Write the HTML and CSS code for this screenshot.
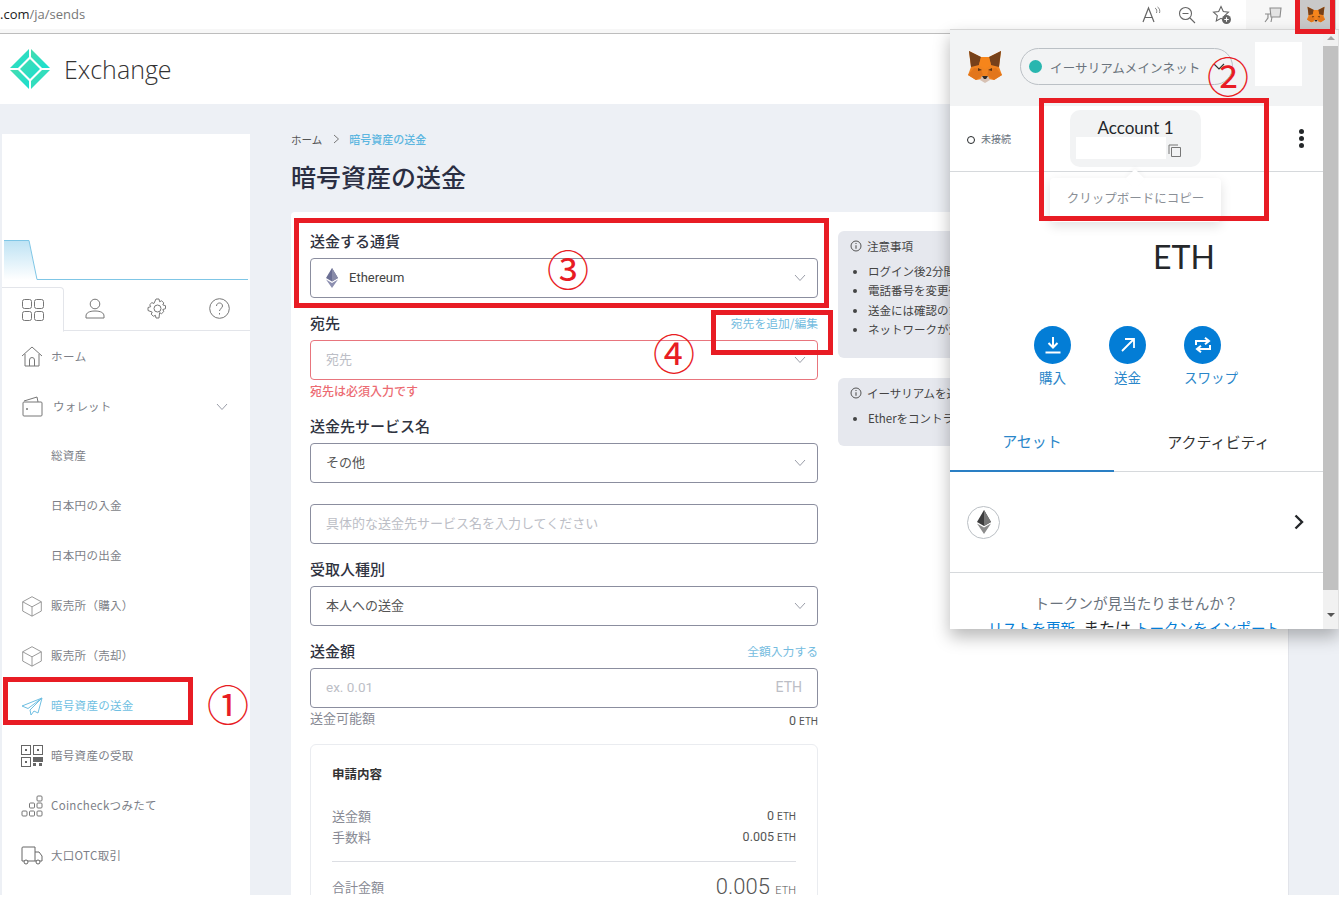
FILE: index.html
```html
<!DOCTYPE html>
<html lang="ja">
<head>
<meta charset="utf-8">
<title>暗号資産の送金</title>
<link rel="stylesheet" href="styles.css">
</head>
<body>
<svg class="defs" width="0" height="0">
  <symbol id="fox" viewBox="0 0 34 33">
    <polygon points="1,1 13,7 21,7 33,1 31,17 34,25 26,30 20,29 14,29 8,30 0,25 3,17" fill="#f0831f"/>
    <polygon points="1,1 13,7 11,15 3,17" fill="#76411a"/>
    <polygon points="33,1 21,7 23,15 31,17" fill="#76411a"/>
    <polygon points="13,7 21,7 23,15 17,19 11,15" fill="#f6851b"/>
    <polygon points="6,18 13,19 15,25 8,30 0,25" fill="#e2761b"/>
    <polygon points="28,18 21,19 19,25 26,30 34,25" fill="#e2761b"/>
    <polygon points="10,18 14,20 10,21" fill="#5c3410"/>
    <polygon points="24,18 20,20 24,21" fill="#5c3410"/>
    <polygon points="14,26 20,26 22,30 17,33 12,30" fill="#d7c1b3"/>
    <polygon points="14,26 20,26 18,29 16,29" fill="#2f2a26"/>
  </symbol>
  <symbol id="chev" viewBox="0 0 12 8">
    <path d="M1 1l5 5.5L11 1" fill="none" stroke="#9a9da8" stroke-width="1"/>
  </symbol>
  <symbol id="info" viewBox="0 0 12 12">
    <circle cx="6" cy="6" r="5" fill="none" stroke="#555" stroke-width="1"/>
    <path d="M6 5.2v3.6M6 3v1.1" stroke="#555" stroke-width="1.1"/>
  </symbol>
  <symbol id="box" viewBox="0 0 26 26">
    <path d="M13 2l11 6v11l-11 6L2 19V8zM2 8l11 6 11-6M13 14v11" fill="none" stroke="#888" stroke-width="1"/>
  </symbol>
</svg>

<header class="toolbar">
  <div class="url"><span class="url-host">.com</span>/ja/sends</div>
  <div class="tools">
    <svg class="tool" width="20" height="18" viewBox="0 0 20 18"><path d="M1 16L6.5 2 12 16M3 11.500h7" fill="none" stroke="#666" stroke-width="1.200"/><path d="M13 2c2 1 2 3 1.500 5M15.500 1c2.500 1.500 2.500 4 2 6" fill="none" stroke="#777" stroke-width=".9"/></svg>
    <svg class="tool" width="18" height="18" viewBox="0 0 18 18"><circle cx="7.500" cy="7.500" r="6" fill="none" stroke="#666" stroke-width="1.100"/><path d="M4.500 7.500h6M12 12l5 5" stroke="#666" stroke-width="1.100"/></svg>
    <svg class="tool" width="20" height="20" viewBox="0 0 20 20"><path d="M9 1.500l2.300 5 5.200.6-3.800 3.600 1 5.300L9 13.300 4.300 16l1-5.300L1.500 7.100l5.200-.6z" fill="none" stroke="#666" stroke-width="1.100"/><circle cx="14.500" cy="14.500" r="4.500" fill="#666"/><path d="M14.500 12.300v4.400M12.300 14.500h4.400" stroke="#fff" stroke-width="1.100"/></svg>
  </div>
  <div class="ext-area">
    <svg class="ext" width="20" height="18" viewBox="0 0 20 18"><path d="M7 2h11l-1 9H8zM2 8h6M5 8v4l-3 4M9 11l-1 5" fill="#e3e3e3" stroke="#8b8b8b" stroke-width="1.100"/></svg>
    <div class="ext-fox"><svg width="18" height="18"><use href="#fox"/></svg></div>
  </div>
</header>
<div class="toolbar-strip"></div>

<section class="site-header">
  <svg class="logo" width="42" height="42" viewBox="0 0 42 42">
    <defs><linearGradient id="lg" x1="0" y1="0" x2="1" y2="1"><stop offset="0" stop-color="#45dcae"/><stop offset="1" stop-color="#19dfd2"/></linearGradient></defs>
    <polygon points="20,1 20,9 9,20 1,20" fill="url(#lg)"/>
    <polygon points="22,1 22,9 33,20 41,20" fill="url(#lg)"/>
    <polygon points="20,41 20,33 9,22 1,22" fill="url(#lg)"/>
    <polygon points="22,41 22,33 33,22 41,22" fill="url(#lg)"/>
    <polygon points="21,11 31,21 21,31 11,21" fill="url(#lg)"/>
  </svg>
  <div class="brand">Exchange</div>
</section>

<div class="page">
  <aside class="sidebar">
    <svg class="chart" width="244" height="41" viewBox="0 0 244 41">
      <defs><linearGradient id="cg" x1="0" y1="0" x2="0" y2="1"><stop offset="0" stop-color="#bfe3f4"/><stop offset="1" stop-color="#fff"/></linearGradient></defs>
      <path d="M0 1H25L33 40H0z" fill="url(#cg)"/>
      <path d="M0 .5H25L33 39.500H244" fill="none" stroke="#7fc6e6" stroke-width="1"/>
    </svg>
    <div class="side-tabs">
      <div class="side-tab is-active"><svg width="22" height="22" viewBox="0 0 22 22"><g fill="none" stroke="#777"><rect x=".5" y=".5" width="9" height="9" rx="2"/><rect x="12.500" y=".5" width="9" height="9" rx="2"/><rect x=".5" y="12.500" width="9" height="9" rx="2"/><rect x="12.500" y="12.500" width="9" height="9" rx="2"/></g></svg></div>
      <div class="side-tab"><svg width="20" height="21" viewBox="0 0 20 21"><g fill="none" stroke="#777"><circle cx="10" cy="6" r="4.800"/><path d="M1 20v-2c0-3 3-5 9-5s9 2 9 5v2z"/></g></svg></div>
      <div class="side-tab"><svg width="21" height="21" viewBox="0 0 21 21"><g fill="none" stroke="#777"><circle cx="10.500" cy="10.500" r="3.500"/><path d="M9 1h3l.6 2.700 2-.9 2.200 2.100-1 2 2.700.8v3l-2.700.8 1 2-2.200 2.200-2-1L12 20H9l-.6-2.700-2 1-2.200-2.200 1-2L1 12.500v-3l2.700-.8-1-2 2.200-2.100 2 .9z"/></g></svg></div>
      <div class="side-tab"><svg width="21" height="21" viewBox="0 0 21 21"><circle cx="10.500" cy="10.500" r="9.800" fill="none" stroke="#777"/><path d="M7.500 8c0-4 6-4 6 0 0 2.500-3 2.500-3 5M10.500 15v1.500" fill="none" stroke="#777"/></svg></div>
    </div>
    <nav class="menu">
      <a class="menu-item"><svg class="mi" width="22" height="21" viewBox="0 0 22 21"><path d="M1 10L11 1l10 9M4 8v12h14V8M8.500 20v-6a2.500 2.500 0 015 0v6" fill="none" stroke="#777"/></svg><span class="spaced">ホーム</span></a>
      <a class="menu-item"><svg class="mi" width="22" height="21" viewBox="0 0 22 21"><path d="M3 6h17a1 1 0 011 1v12a1 1 0 01-1 1H3a1 1 0 01-1-1V7a1 1 0 011-1zM3 5l13-4 1 5" fill="none" stroke="#777"/><circle cx="6" cy="13" r="1" fill="#777"/></svg><span class="spaced wide">ウォレット</span><svg class="mc" width="12" height="8"><use href="#chev"/></svg></a>
      <a class="menu-item sub">総資産</a>
      <a class="menu-item sub">日本円の入金</a>
      <a class="menu-item sub">日本円の出金</a>
      <a class="menu-item"><svg class="mi" width="22" height="22"><use href="#box"/></svg><span>販売所（購入）</span></a>
      <a class="menu-item"><svg class="mi" width="22" height="22"><use href="#box"/></svg><span>販売所（売却）</span></a>
      <a class="menu-item is-current"><svg class="mi" width="22" height="19" viewBox="0 0 22 19"><path d="M21 1L1 9l6 2.500L21 1 9 13l1 5 3-4 4 2z" fill="none" stroke="#6fbfe2"/></svg><span>暗号資産の送金</span></a>
      <a class="menu-item"><svg class="mi" width="22" height="22" viewBox="0 0 22 22"><g fill="none" stroke="#666"><rect x=".5" y=".5" width="9" height="9"/><rect x="12.500" y=".5" width="9" height="9"/><rect x=".5" y="12.500" width="9" height="9"/></g><g fill="#666"><rect x="4" y="4" width="2" height="2"/><rect x="16" y="4" width="2" height="2"/><rect x="4" y="16" width="2" height="2"/><rect x="12" y="12" width="10" height="5"/><rect x="12" y="18" width="3" height="3"/><rect x="18" y="18" width="3" height="3"/></g></svg><span>暗号資産の受取</span></a>
      <a class="menu-item"><svg class="mi" width="22" height="22" viewBox="0 0 22 22"><g fill="none" stroke="#777"><rect x="16" y="1" width="5" height="5" rx="1"/><rect x="8.500" y="8" width="5" height="5" rx="1"/><rect x="16" y="8" width="5" height="5" rx="1"/><rect x="1" y="16" width="5" height="5" rx="1"/><rect x="8.500" y="16" width="5" height="5" rx="1"/><rect x="16" y="16" width="5" height="5" rx="1"/></g></svg><span>Coincheckつみたて</span></a>
      <a class="menu-item"><svg class="mi" width="22" height="20" viewBox="0 0 22 20"><path d="M2 1h12v14H1V2a1 1 0 011-1zM14 6h4l3 4v5h-7" fill="none" stroke="#666"/><circle cx="5" cy="16" r="2" fill="#fff" stroke="#666"/><circle cx="17" cy="16" r="2" fill="#fff" stroke="#666"/></svg><span>大口OTC取引</span></a>
    </nav>
  </aside>

  <main class="content">
    <div class="crumbs"><span>ホーム</span><svg width="7" height="10" viewBox="0 0 7 10"><path d="M1 1l4.500 4L1 9" fill="none" stroke="#777"/></svg><span class="crumb-now">暗号資産の送金</span></div>
    <h1 class="title">暗号資産の送金</h1>
    <div class="card">
      <form class="form">
        <div class="field">
          <div class="label-row"><label class="label">送金する通貨</label></div>
          <div class="control">
            <svg class="eth-mini" width="12" height="20" viewBox="0 0 12 20"><polygon points="6,0 12,10 6,13.500 0,10" fill="#6b6f94"/><polygon points="6,0 12,10 6,13.500" fill="#888ba8"/><polygon points="0,11.500 6,15 12,11.500 6,20" fill="#8c8fb0"/></svg>
            <span class="value">Ethereum</span>
            <svg class="chev" width="12" height="8"><use href="#chev"/></svg>
          </div>
        </div>
        <div class="field">
          <div class="label-row"><label class="label">宛先</label><a class="link">宛先を追加/編集</a></div>
          <div class="control is-error">
            <span class="placeholder">宛先</span>
            <svg class="chev" width="12" height="8"><use href="#chev"/></svg>
          </div>
          <div class="error">宛先は必須入力です</div>
        </div>
        <div class="field">
          <div class="label-row"><label class="label">送金先サービス名</label></div>
          <div class="control"><span class="plain">その他</span><svg class="chev" width="12" height="8"><use href="#chev"/></svg></div>
          <div class="control second"><span class="placeholder">具体的な送金先サービス名を入力してください</span></div>
        </div>
        <div class="field">
          <div class="label-row"><label class="label">受取人種別</label></div>
          <div class="control"><span class="plain">本人への送金</span><svg class="chev" width="12" height="8"><use href="#chev"/></svg></div>
        </div>
        <div class="field">
          <div class="label-row"><label class="label">送金額</label><a class="link">全額入力する</a></div>
          <div class="control"><span class="placeholder latin">ex. 0.01</span><span class="unit">ETH</span></div>
          <div class="avail"><span>送金可能額</span><span class="amount">0 <small>ETH</small></span></div>
        </div>
        <div class="summary">
          <div class="summary-title">申請内容</div>
          <div class="sum-row"><span>送金額</span><span class="amount">0 <small>ETH</small></span></div>
          <div class="sum-row"><span>手数料</span><span class="amount">0.005 <small>ETH</small></span></div>
          <div class="sum-rule"></div>
          <div class="sum-row total"><span>合計金額</span><span class="amount">0.005 <small>ETH</small></span></div>
        </div>
      </form>
      <div class="notes">
        <div class="note first">
          <div class="note-title"><svg width="12" height="12"><use href="#info"/></svg>注意事項</div>
          <ul>
            <li>ログイン後2分間は送金できません</li>
            <li>電話番号を変更後は送金できません</li>
            <li>送金には確認のため時間がかかります</li>
            <li>ネットワークが混雑しています</li>
          </ul>
        </div>
        <div class="note second">
          <div class="note-title"><svg width="12" height="12"><use href="#info"/></svg>イーサリアムを送金する際の注意</div>
          <ul>
            <li>Etherをコントラクトへ送金できません</li>
          </ul>
        </div>
      </div>
    </div>
  </main>
</div>

<div class="mm">
  <div class="mm-body">
    <div class="mm-head">
      <svg width="34" height="33"><use href="#fox"/></svg>
      <div class="mm-net"><i class="mm-dot"></i><span>イーサリアムメインネット</span><svg width="12" height="8" viewBox="0 0 12 8"><path d="M1 1l5 5 5-5" fill="none" stroke="#333" stroke-width="1.200"/></svg></div>
      <div class="mm-avatar"></div>
    </div>
    <div class="mm-acct">
      <div class="mm-conn"><i></i>未接続</div>
      <div class="mm-name">
        <div class="mm-name-text">Account 1</div>
        <div class="mm-addr-row">
          <div class="mm-addr"></div>
          <svg width="13" height="13" viewBox="0 0 13 13"><path d="M3.500 3.500h9v9h-9zM1 10V1h9" fill="none" stroke="#777"/></svg>
        </div>
      </div>
      <div class="mm-kebab"><i></i><i></i><i></i></div>
    </div>
    <div class="mm-tip">クリップボードにコピー</div>
    <div class="mm-balance">ETH</div>
    <div class="mm-actions">
      <div class="mm-act"><span class="mm-btn"><svg width="18" height="18" viewBox="0 0 18 18"><path d="M9 1v10M4.500 7L9 11.500 13.500 7M1.500 16.500h15" fill="none" stroke="#fff" stroke-width="2"/></svg></span><span class="mm-act-label">購入</span></div>
      <div class="mm-act"><span class="mm-btn"><svg width="16" height="16" viewBox="0 0 16 16"><path d="M2 14L14 2M5 2h9v9" fill="none" stroke="#fff" stroke-width="1.800"/></svg></span><span class="mm-act-label">送金</span></div>
      <div class="mm-act is-swap"><span class="mm-btn"><svg width="18" height="16" viewBox="0 0 18 16"><path d="M2 8V4h12M11 .8L15 4l-4 3.200M16 8v4H4M7 8.800L3 12l4 3.200" fill="none" stroke="#fff" stroke-width="2"/></svg></span><span class="mm-act-label">スワップ</span></div>
    </div>
    <div class="mm-tabs">
      <div class="mm-tab is-on">アセット</div>
      <div class="mm-tab">アクティビティ</div>
    </div>
    <div class="mm-asset">
      <span class="mm-eth"><svg width="14" height="24" viewBox="0 0 14 24"><polygon points="7,0 14,12 7,16 0,12" fill="#3c3c3d"/><polygon points="7,0 14,12 7,16" fill="#777"/><polygon points="0,13.500 7,17.500 14,13.500 7,24" fill="#8c8c8c"/></svg></span>
      <svg width="10" height="16" viewBox="0 0 10 16"><path d="M1.500 1.500L8 8l-6.500 6.500" fill="none" stroke="#24272a" stroke-width="2.400"/></svg>
    </div>
    <div class="mm-foot">
      <div>トークンが見当たりませんか？</div>
      <div class="mm-foot-links"><a>リストを更新</a><span class="mm-or">または</span><a>トークンをインポート</a></div>
    </div>
  </div>
  <div class="mm-scroll">
    <span class="arrow up"></span>
    <span class="thumb"></span>
    <span class="arrow down"></span>
  </div>
</div>

<div class="mark m1"></div><div class="mark m2"></div><div class="mark m3"></div><div class="mark m4"></div><div class="mark m5"></div>
<span class="num n1">①</span><span class="num n2">②</span><span class="num n3">③</span><span class="num n4">④</span>
</body>
</html>
```
FILE: styles.css
```css
* { box-sizing: border-box; }
html, body { margin: 0; padding: 0; }
body {
  position: relative;
  width: 1339px;
  height: 907px;
  overflow: hidden;
  background: #fff;
  font-family: "Noto Sans CJK JP", "Noto Sans", sans-serif;
  color: #4a4a55;
}
.defs { position: absolute; }
svg { display: block; flex: none; }

/* browser toolbar */
.toolbar { display: flex; height: 29px; background: #fff; align-items: center; }
.url { font: 13px/1 "Open Sans", sans-serif; color: #777; flex: 1; }
.url-host { color: #222; }
.tools { display: flex; align-items: center; gap: 16px; padding-left: 9px; width: 113px; }
.ext-area { width: 93px; height: 29px; background: #f7f7f7; display: flex; align-items: center; padding-left: 17px; }
.ext-fox { width: 40px; height: 29px; margin-left: 13px; background: #c9c9c9; display: flex; align-items: center; justify-content: center; }
.toolbar-strip { height: 5px; background: #f7f7f7; border-bottom: 1px solid #bdbdbd; }

/* site header */
.site-header { height: 70px; background: #fff; display: flex; align-items: center; padding-left: 9px; }
.brand { font: 300 25px/1 "Open Sans", sans-serif; color: #333; margin-left: 13px; }

/* page */
.page { height: 791px; background: #edf0f5; display: flex; overflow: hidden; padding-top: 30px; align-items: flex-start; }
.sidebar { width: 248px; margin-left: 2px; height: 761px; background: #fff; padding-top: 106px; flex: none; }
.chart { margin-left: 2px; }
.side-tabs { display: flex; height: 44px; margin-top: 6px; border-bottom: 1px solid #e3e5ea; }
.side-tab { width: 62px; display: flex; align-items: center; justify-content: center; }
.side-tab.is-active { width: 62px; background: #fff; border: 1px solid #e3e5ea; border-bottom: 1px solid #fff; border-left: 0; border-radius: 0 4px 0 0; height: 45px; }

.menu { display: flex; flex-direction: column; }
.menu-item { height: 50px; display: flex; align-items: center; padding-left: 19px; font-size: 11.500px; letter-spacing: .3px; color: #7d7f88; position: relative; }
.menu-item > span { padding-bottom: 2px; }
.menu-item .mi { width: 22px; margin-right: 8px; }
.menu-item.sub { padding-left: 49px; padding-bottom: 2px; }
.menu-item > .spaced { letter-spacing: .5px; padding-bottom: 0; }
.menu-item > .wide { letter-spacing: .2px; margin-left: 2px; }
.mc { position: absolute; right: 22px; top: 22px; }
.menu-item.is-current { color: #6fbfe2; }

/* main */
.content { margin-left: 41px; margin-top: -1px; width: 998px; flex: none; }
.crumbs { display: flex; align-items: center; font-size: 10.500px; height: 12px; color: #555; }
.crumbs svg { margin: 0 9px 0 11px; }
.crumb-now { color: #5cb6e0; font-weight: 500; font-size: 11px; }
.title { margin: 13px 0 0; font-size: 25px; line-height: 36px; font-weight: 500; color: #2a2e42; height: 54px; }
.card { background: #fff; border-radius: 4px 4px 0 0; border-right: 1px solid #e2e4ea; display: flex; padding: 20px 19px 0; height: 683px; }
.form { width: 508px; flex: none; }
.field { margin-bottom: 16px; }
.label-row { display: flex; justify-content: space-between; align-items: center; height: 20px; margin-bottom: 6px; }
.label { font-size: 15px; font-weight: 500; color: #30333f; padding-bottom: 4px; }
.link { font-size: 11.800px; color: #74bce0; padding-bottom: 3px; }
.control { height: 40px; border: 1px solid #8b8e9f; border-radius: 4px; display: flex; align-items: center; padding: 0 15px; position: relative; }
.control.second { margin-top: 21px; }
.control.is-error { border-color: #e8757d; }
.eth-mini { margin-right: 11px; }
.value { font: 13px "Roboto", sans-serif; color: #444; padding-bottom: 1px; }
.plain { font-size: 13px; color: #555; padding-bottom: 3px; }
.placeholder { font-size: 13px; color: #bcbec6; padding-bottom: 3px; }
.placeholder.latin { font-family: "Roboto", sans-serif; font-size: 13.500px; padding-bottom: 3px; }
.unit { margin-left: auto; font: 14px "Roboto", sans-serif; color: #bcbec6; padding-bottom: 2px; }
.chev { margin-left: auto; margin-right: -4px; }
.error { font-size: 12px; font-weight: 500; color: #ec6b72; height: 19px; line-height: 18px; margin-top: 2px; }
.avail { display: flex; justify-content: space-between; align-items: center; height: 20px; font-size: 13px; color: #888a94; margin-top: 1px; }
.avail > span:first-child { padding-bottom: 3px; }
.amount { font: 12.500px "Roboto", sans-serif; color: #555; }
.avail .amount { padding-top: 2px; }
.amount small { font-size: 10px; }
.summary { border: 1px solid #eaecf0; border-radius: 6px; padding: 20px 21px; margin-top: -1px; height: 180px; }
.summary-title { font-size: 12.500px; font-weight: 700; color: #333; height: 18px; line-height: 18px; margin-bottom: 22px; }
.sum-row { display: flex; justify-content: space-between; align-items: center; height: 21px; font-size: 13px; color: #888a94; }
.sum-rule { height: 1px; background: #dcdee3; margin: 14px 0 14px; }
.sum-row.total .amount { font-size: 22px; font-weight: 300; }
.sum-row.total .amount small { font-size: 11px; }

.notes { margin-left: 20px; width: 432px; flex: none; margin-top: -1px; }
.note { background: #e6e8ee; border-radius: 6px; padding: 6px 12px 12px; font-size: 11.500px; color: #444; }
.note.first { height: 127px; margin-bottom: 20px; }
.note.second { height: 68px; }
.note-title { display: flex; align-items: center; gap: 5px; height: 18px; }
.note ul { margin: 7px 0 0; padding: 0 0 0 18px; }
.note li { height: 19.300px; line-height: 19.300px; }

/* wallet popup */
.mm { position: absolute; left: 950px; top: 29px; width: 389px; height: 600px; display: flex; background: #fff; box-shadow: 0 8px 16px rgba(0,0,0,.28); overflow: hidden; border-top: 1px solid #d5d5d5; }
.mm-body { width: 373px; position: relative; overflow: hidden; }
.mm-scroll { width: 16px; background: #f1f1f1; display: flex; flex-direction: column; align-items: center; border-right: 1px solid #e0e0e0; }
.thumb { width: 15px; height: 544px; background: #c1c1c1; }
.arrow { width: 0; height: 0; border-left: 4px solid transparent; border-right: 4px solid transparent; }
.arrow.up { border-bottom: 4px solid #a3a3a3; margin: 6px 0; }
.arrow.down { border-top: 4px solid #555; margin-top: 23px; }
.mm-head { height: 76px; background: #f2f3f4; display: flex; align-items: center; padding-left: 18px; }
.mm-head > svg { margin-top: -3px; }
.mm-net { width: 213px; height: 37px; margin-left: 18px; margin-top: -3px; border: 1px solid #bbc0c5; border-radius: 19px; display: flex; align-items: center; padding-left: 8px; font-size: 12.500px; color: #6a737d; }
.mm-net span { margin-left: 8px; letter-spacing: .15px; padding-top: 2px; }
.mm-net svg { margin-left: 13px; }
.mm-dot { width: 13px; height: 13px; border-radius: 50%; background: #29b6af; }
.mm-avatar { width: 47px; height: 44px; background: #fff; margin-left: 22px; margin-top: -9px; }
.mm-acct { height: 66px; border-bottom: 1px solid #d6d9dc; position: relative; display: flex; align-items: center; }
.mm-conn { display: flex; align-items: center; font-size: 10px; color: #6a737d; margin-left: 17px; gap: 6px; }
.mm-conn i { width: 8px; height: 8px; border: 1.500px solid #24272a; border-radius: 50%; margin-top: 2px; }
.mm-name { position: absolute; left: 120px; top: 4px; width: 131px; height: 57px; background: #f2f3f4; border-radius: 10px; text-align: center; padding: 9px 6px 0; }
.mm-name-text { font: 17px/18px "Lato", sans-serif; color: #24272a; }
.mm-addr-row { display: flex; align-items: center; }
.mm-addr { width: 90px; height: 22px; background: #fff; margin-right: 2px; }
.mm-addr-row svg { margin: 5px 0 0 0; }
.mm-kebab { position: absolute; left: 349px; top: 23px; display: flex; flex-direction: column; gap: 2px; }
.mm-kebab i { width: 5px; height: 5px; border-radius: 50%; background: #24272a; }
.mm-tip { position: absolute; left: 100px; top: 148px; width: 171px; height: 44px; background: #fff; border-radius: 4px; box-shadow: 0 4px 12px rgba(0,0,0,.12); font-size: 12.500px; color: #8a8f96; display: flex; align-items: center; justify-content: center; padding-bottom: 6px; }
.mm-tip::before { content: ""; position: absolute; left: 78px; top: -6px; width: 14px; height: 14px; background: #fff; transform: rotate(45deg); box-shadow: -2px -2px 4px rgba(0,0,0,.03); }
.mm-balance { padding-left: 203px; margin-top: 64px; font: 32px/42px "Lato", sans-serif; color: #24272a; height: 42px; }
.mm-actions { display: flex; padding-left: 84px; gap: 38px; margin-top: 48px; }
.mm-act { width: 37px; display: flex; flex-direction: column; align-items: center; white-space: nowrap; }
.mm-act.is-swap { align-items: flex-start; }
.mm-btn { width: 37px; height: 38px; border-radius: 50%; background: #037dd6; display: flex; align-items: center; justify-content: center; }
.mm-act-label { font-size: 13.500px; line-height: 22px; color: #2a86c9; margin-top: 2px; }
.mm-tabs { display: flex; margin-top: 28px; height: 56px; border-bottom: 1px solid #d6d9dc; }
.mm-tab { width: 209px; display: flex; align-items: center; justify-content: center; font-size: 15px; color: #333; padding-bottom: 5px; }
.mm-tab.is-on { width: 164px; color: #2a86c9; border-bottom: 2px solid #2a7fc4; height: 56px; }
.mm-asset { height: 101px; border-bottom: 1px solid #d6d9dc; display: flex; align-items: center; justify-content: space-between; padding: 0 19px 0 17px; }
.mm-eth { width: 33px; height: 33px; border: 1px solid #bbc0c5; border-radius: 50%; display: flex; align-items: center; justify-content: center; }
.mm-foot { text-align: center; font-size: 14.600px; color: #6a737d; padding-top: 17px; line-height: 25px; }
.mm-foot-links { color: #24272a; white-space: nowrap; font-size: 14.500px; padding-right: 5px; }
.mm-foot-links a { color: #037dd6; }
.mm-or { font-size: 16px; margin: 0 4px 0 8px; }

/* annotations */
.mark { position: absolute; border: 5px solid #e81c24; }
.m1 { left: 3px; top: 677px; width: 190px; height: 48px; }
.m2 { left: 1039px; top: 98px; width: 230px; height: 123px; }
.m3 { left: 294px; top: 218px; width: 535px; height: 90px; }
.m4 { left: 711px; top: 310px; width: 122px; height: 45px; }
.m5 { left: 1295px; top: -6px; width: 40px; height: 40px; }
.num { position: absolute; font: 400 42px/42px "Noto Sans CJK JP", sans-serif; color: #e81c24; width: 42px; text-align: center; }
.n1 { left: 207px; top: 682px; }
.n2 { left: 1207px; top: 54px; }
.n3 { left: 547px; top: 247px; }
.n4 { left: 653px; top: 331px; }
```
